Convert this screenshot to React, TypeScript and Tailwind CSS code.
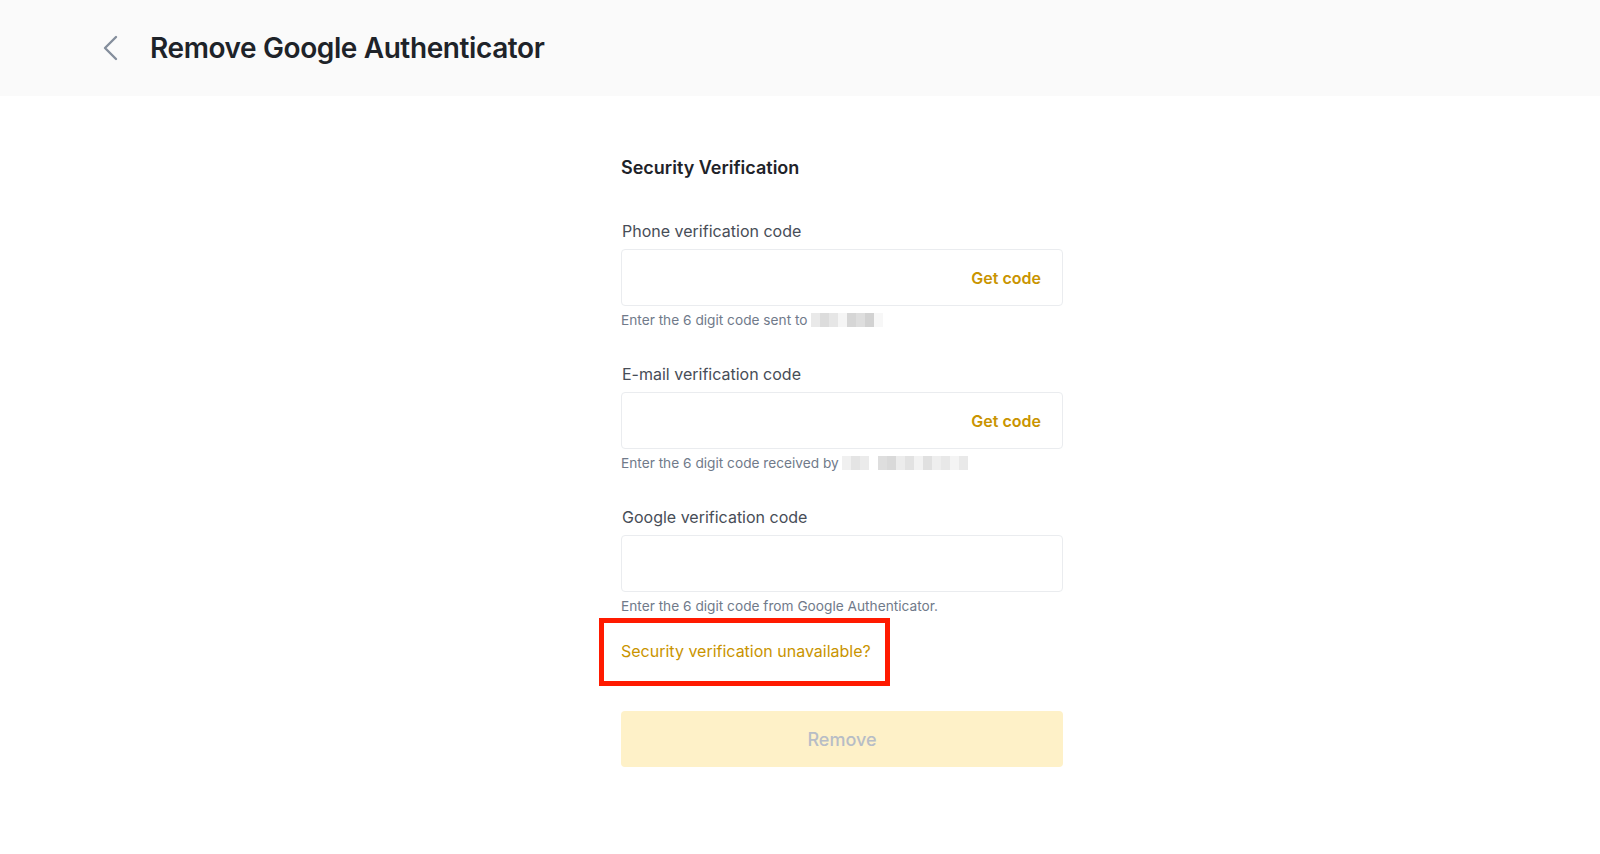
import React from "react";

const font = { fontFamily: "Inter, 'Noto Sans', sans-serif" };

function Blurred({ shades }: { shades: string[] }) {
  // pixelated placeholder for the masked phone / email
  return (
    <span className="inline-flex h-[14px] items-stretch align-middle ml-[3px]">
      {shades.map((c, i) => (
        <span key={i} className="w-[9px]" style={{ backgroundColor: c }} />
      ))}
    </span>
  );
}

function Field({
  label,
  action,
  helper,
  masked,
}: {
  label: string;
  action?: string;
  helper: string;
  masked?: string[];
}) {
  return (
    <div className="flex flex-col">
      <label className="text-[16px] leading-[24px] text-[#474d57] pl-[1px]">{label}</label>
      <div className="mt-[6px] h-[57px] rounded-[4px] border border-[#eaecef] flex items-center justify-end px-[21px]">
        {action && (
          <button className="text-[16px] font-semibold text-[#c99400]">{action}</button>
        )}
      </div>
      <p className="mt-[5px] text-[13.7px] leading-[18px] text-[#707a8a] flex items-center">
        {helper}
        {masked && <Blurred shades={masked} />}
      </p>
    </div>
  );
}

export default function App() {
  return (
    <div className="min-h-[854px] bg-white" style={font}>
      {/* Header */}
      <header className="h-[96px] bg-[#fafafa] flex items-center pl-[101px]">
        <svg width="18" height="28" viewBox="0 0 18 28" fill="none" className="mr-[31px]">
          <path d="M15 3 L4 14 L15 25" stroke="#848e9c" strokeWidth="2.4" strokeLinecap="round" strokeLinejoin="round" />
        </svg>
        <h1 className="text-[28px] font-semibold text-[#1e2329] tracking-[-0.4px]">
          Remove Google Authenticator
        </h1>
      </header>

      {/* Form */}
      <main className="flex justify-center">
        <div className="w-[442px] ml-[84px] pt-[58px]">
          <h2 className="text-[18px] font-semibold text-[#1e2329] leading-[28px]">Security Verification</h2>

          <div className="mt-[37px] flex flex-col gap-[33px]">
            <Field
              label="Phone verification code"
              action="Get code"
              helper="Enter the 6 digit code sent to"
              masked={["#e9e9e9", "#dcdcdc", "#e6e6e6", "#f5f5f5", "#d6d6d6", "#dedede", "#d2d2d2", "#f7f7f7"]}
            />
            <Field
              label="E-mail verification code"
              action="Get code"
              helper="Enter the 6 digit code received by"
              masked={[
                "#f0f0f0", "#e4e4e4", "#ebebeb", "#ffffff", "#dedede", "#d9d9d9",
                "#ececec", "#e2e2e2", "#f2f2f2", "#e0e0e0", "#eeeeee", "#e8e8e8", "#f4f4f4", "#e9e9e9",
              ]}
            />
            <Field label="Google verification code" helper="Enter the 6 digit code from Google Authenticator." />
          </div>

          <div className="mt-[24px] relative inline-block">
            <a className="text-[16px] leading-[24px] text-[#c99400] cursor-pointer">
              Security verification unavailable?
            </a>
            <span className="absolute left-[-22px] right-[-19px] top-[-21px] bottom-[-23px] border-[5px] border-[#ff1a00] pointer-events-none" />
          </div>

          <button className="mt-[48px] w-full h-[56px] rounded-[4px] bg-[#fef1c8] text-[18px] font-medium text-[#b7bdc6]">
            Remove
          </button>
        </div>
      </main>
    </div>
  );
}
